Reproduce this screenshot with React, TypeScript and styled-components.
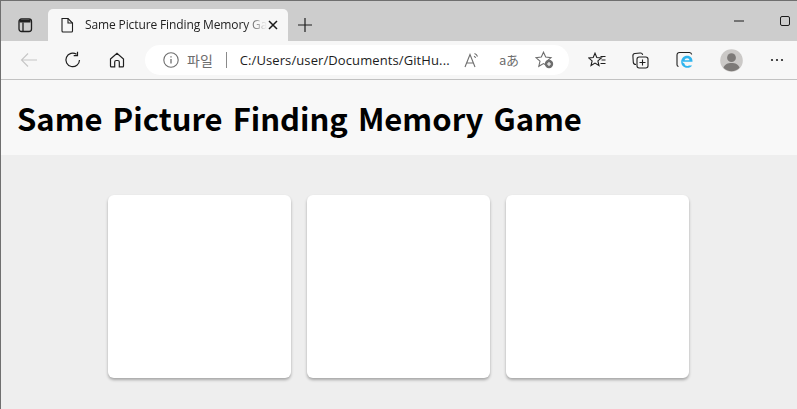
import React from "react";
import styled, { createGlobalStyle } from "styled-components";

const Global = createGlobalStyle`
  html, body { margin: 0; padding: 0; height: 100%; overflow: hidden; background: #eeeeee; }
  #root { height: 100%; }
`;

const Win = styled.div`
  width: 797px; height: 409px; box-sizing: border-box; overflow: hidden;
  border-top: 1px solid #6f6f6f; border-left: 1px solid #6f6f6f;
  display: flex; flex-direction: column;
  font-family: "Open Sans", "Noto Sans CJK KR", sans-serif;
`;
const TabStrip = styled.div`
  height: 40px; flex: none; background: #cdcdcd; display: flex; align-items: flex-end;
`;
const IconSlot = styled.div<{ $w: number }>`
  width: ${p => p.$w}px; height: 32px; flex: none; display: flex; align-items: center; justify-content: center;
`;
const Tab = styled.div`
  width: 240px; height: 32px; flex: none; background: #f7f7f7; border-radius: 5px 5px 0 0;
  display: flex; align-items: center; padding: 0 9px 0 12px; box-sizing: border-box;
`;
const TabTitle = styled.span`
  flex: 1; margin-left: 11px; font: 12px/16px "Open Sans", sans-serif; letter-spacing: -.12px; color: #222; white-space: nowrap; overflow: hidden;
  mask-image: linear-gradient(to right, #000 88%, transparent 100%);
`;
const Spacer = styled.div`flex: 1;`;
const MinCtl = styled.div`
  width: 46px; height: 40px; align-self: flex-start; flex: none; display: flex; align-items: center; justify-content: center;
`;
const MaxCtl = styled.div`
  width: 35px; height: 40px; align-self: flex-start; flex: none; display: flex; align-items: center; padding-left: 18px; box-sizing: border-box;
`;
const ToolBar = styled.div`
  height: 38px; flex: none; background: #f7f7f7; border-bottom: 1px solid #c2c2c2; display: flex; align-items: center;
  padding-left: 6px;
`;
const ToolBtn = styled.div<{ $w: number }>`
  width: ${p => p.$w}px; height: 30px; flex: none; display: flex; align-items: center; justify-content: center;
`;
const Address = styled.div`
  width: 424px; height: 30px; margin: 0 6px; flex: none; background: #fff; border-radius: 15px;
  display: flex; align-items: center; padding-left: 18px; box-sizing: border-box;
`;
const Scheme = styled.span`
  margin-left: 8px; font: 14px/18px "Noto Sans CJK KR", sans-serif; color: #6d6d6d;
`;
const Divider = styled.span`
  width: 1px; height: 16px; background: #8a8a8a; margin: 0 13px 0 13px;
`;
const Url = styled.span`
  width: 215px; flex: none; font: 13px/18px "Open Sans", sans-serif; letter-spacing: .1px; color: #1c1c1c; white-space: nowrap;
`;
const AddrIcon = styled.div<{ $w: number }>`
  width: ${p => p.$w}px; flex: none; height: 30px; display: flex; align-items: center; justify-content: center;
`;
const TranslateGlyph = styled.span`
  font: 13px/18px "Noto Sans CJK JP", sans-serif; color: #6e6e6e; letter-spacing: -.5px;
`;
const Header = styled.header`
  height: 75px; flex: none; background: #f8f8f8; display: flex; align-items: center; padding-left: 16px;
`;
const Title = styled.h1`
  margin: 0; font: 700 31px/40px "Noto Sans CJK KR", "Open Sans", sans-serif; color: #000; word-spacing: 3px; white-space: nowrap;
`;
const Board = styled.main`
  flex: 1; background: #eeeeee; display: flex; justify-content: center; gap: 16px; padding: 40px 1px 0 0;
`;
const Card = styled.div`
  width: 183px; height: 183px; background: #fff; border-radius: 6px; box-shadow: 0 2px 3px rgba(0,0,0,.3);
`;

const S = { fill: "none", stroke: "#1f1f1f", strokeWidth: 1.1 } as const;
const G = { fill: "none", stroke: "#6e6e6e", strokeWidth: 1.1 } as const;

export default function App() {
  return (
    <Win>
      <Global />
      <TabStrip>
        <IconSlot $w={47}>
          <svg width="16" height="16" viewBox="0 0 16 16" {...S} strokeWidth={1.3}>
            <rect x="2" y="2" width="12.500" height="12.500" rx="2.500" />
            <path d="M6 5.500v9" />
            <path d="M2.500 3h11v2.500h-11z" fill="#1f1f1f" stroke="none" />
          </svg>
        </IconSlot>
        <Tab>
          <svg width="14" height="16" viewBox="0 0 14 16" {...S}>
            <path d="M2 1.500h6l4.500 4.500v8a1 1 0 0 1-1 1H3a1 1 0 0 1-1-1z" />
            <path d="M8 1.500V6h4.500" />
          </svg>
          <TabTitle>Same Picture Finding Memory Game</TabTitle>
          <svg width="12" height="12" viewBox="0 0 12 12" fill="none" stroke="#1a1a1a" strokeWidth="1.500">
            <path d="M2 2l8 8M10 2l-8 8" />
          </svg>
        </Tab>
        <IconSlot $w={33}>
          <svg width="16" height="16" viewBox="0 0 16 16" fill="none" stroke="#1f1f1f" strokeWidth="1.200">
            <path d="M8 1v14M1 8h14" />
          </svg>
        </IconSlot>
        <Spacer />
        <MinCtl>
          <svg width="10" height="2" viewBox="0 0 10 2"><path d="M0 1h10" stroke="#1a1a1a" strokeWidth="1" /></svg>
        </MinCtl>
        <MaxCtl>
          <svg width="10" height="10" viewBox="0 0 10 10" fill="none"><rect x=".5" y=".5" width="9" height="9" rx="1.500" stroke="#1a1a1a" /></svg>
        </MaxCtl>
      </TabStrip>
      <ToolBar>
        <ToolBtn $w={44}>
          <svg width="18" height="16" viewBox="0 0 18 16" fill="none" stroke="#c6c6c6" strokeWidth="1.100">
            <path d="M17 8H1.500M8 1.500L1.500 8 8 14.500" />
          </svg>
        </ToolBtn>
        <ToolBtn $w={44}>
          <svg width="18" height="18" viewBox="0 0 18 18" {...S} strokeWidth={1.2}>
            <path d="M15.500 9A6.800 6.800 0 1 1 12.600 3.300" />
            <path d="M13.500 .8v3.800H9.700" />
          </svg>
        </ToolBtn>
        <ToolBtn $w={44}>
          <svg width="16" height="16" viewBox="0 0 16 16" {...S} strokeWidth={1.2}>
            <path d="M1.500 7L8 1.300 14.500 7v7a.9.9 0 0 1-.9.9H10.300V10a1.500 1.500 0 0 0-1.500-1.500H7.200A1.500 1.500 0 0 0 5.700 10v4.900H2.400a.9.9 0 0 1-.9-.9z" />
          </svg>
        </ToolBtn>
        <Address>
          <svg width="16" height="16" viewBox="0 0 16 16" {...G}>
            <circle cx="8" cy="8" r="7.200" />
            <path d="M8 7v4.600M8 4.200v1.300" strokeWidth="1.300" />
          </svg>
          <Scheme>파일</Scheme>
          <Divider />
          <Url>C:/Users/user/Documents/GitHu...</Url>
          <AddrIcon $w={36}>
            <svg width="18" height="16" viewBox="0 0 18 16" {...G}>
              <path d="M1 15L6 2.500 11 15M2.800 11h6.400" />
              <path d="M10.500 1.500a5 5 0 0 1 3 3M10 4.300a3 3 0 0 1 1.600 1.600" />
            </svg>
          </AddrIcon>
          <AddrIcon $w={36}>
            <TranslateGlyph>aあ</TranslateGlyph>
          </AddrIcon>
          <AddrIcon $w={36}>
            <svg width="19" height="18" viewBox="0 0 19 18" {...G}>
              <path d="M8.500 1.200l2.200 4.900 5.300.5-4 3.500 1.200 5.200-4.700-2.700-4.700 2.700 1.200-5.200-4-3.500 5.300-.5z" />
              <circle cx="14" cy="13" r="4.200" fill="#6e6e6e" stroke="none" />
              <path d="M14 11v4M12 13h4" stroke="#fff" strokeWidth="1.100" />
            </svg>
          </AddrIcon>
        </Address>
        <ToolBtn $w={44}>
          <svg width="18" height="17" viewBox="0 0 18 17" {...S}>
            <path d="M7 1.200l1.800 4.300 4.600.4-3.500 3 1.100 4.600L7 11.100l-4 2.400 1.100-4.600-3.500-3 4.600-.4z" />
            <path d="M12.500 4.500h5M13.500 8h4M12.500 11.500h5" />
          </svg>
        </ToolBtn>
        <ToolBtn $w={44}>
          <svg width="18" height="17" viewBox="0 0 18 17" {...S}>
            <path d="M4 12.500c-1.500 0-2.500-1-2.700-2.200L.9 4c-.1-1.300.8-2.400 2-2.500L8.200 1c1.200-.1 2.200.7 2.500 1.800" />
            <rect x="5" y="5" width="11" height="11" rx="2.200" />
            <path d="M10.500 7.500v6M7.500 10.500h6" />
          </svg>
        </ToolBtn>
        <ToolBtn $w={44}>
          <svg width="18" height="18" viewBox="0 0 18 18" fill="none">
            <path d="M2.500 15.500C1.500 15.300 1 14.600 1 13.700V4a2.500 2.500 0 0 1 2.500-2.500h10A2.500 2.500 0 0 1 15.700 3.500" stroke="#1f1f1f" strokeWidth="1.100" />
            <path d="M6 10.800h10.500c.3-3.400-2-6-5.300-6-3.500 0-6 2.700-6 6 0 3.500 2.500 6 6 6 2.200 0 3.900-.9 4.900-2.300h-3.300c-.4.4-1 .6-1.700.6-1.400 0-2.400-1-2.500-2.300M8.600 9.300c.2-1.200 1.200-2.100 2.500-2.100s2.300.9 2.400 2.100z" fill="#2fb4ee" fillRule="evenodd" />
          </svg>
        </ToolBtn>
        <ToolBtn $w={48}>
          <svg width="23" height="23" viewBox="0 0 24 24">
            <circle cx="12" cy="12" r="11.800" fill="#cbc9c7" />
            <circle cx="12" cy="9" r="4.600" fill="#7d7a78" />
            <path d="M3.600 19.500C5 15.600 8 14.500 12 14.500s7 1.100 8.400 5A11.500 11.500 0 0 1 3.600 19.500z" fill="#7d7a78" />
          </svg>
        </ToolBtn>
        <ToolBtn $w={44}>
          <svg width="14" height="4" viewBox="0 0 14 4" fill="#1f1f1f">
            <circle cx="2" cy="2" r="1.100" /><circle cx="7" cy="2" r="1.100" /><circle cx="12" cy="2" r="1.100" />
          </svg>
        </ToolBtn>
      </ToolBar>
      <Header>
        <Title>Same Picture Finding Memory Game</Title>
      </Header>
      <Board>
        <Card /><Card /><Card />
      </Board>
    </Win>
  );
}
